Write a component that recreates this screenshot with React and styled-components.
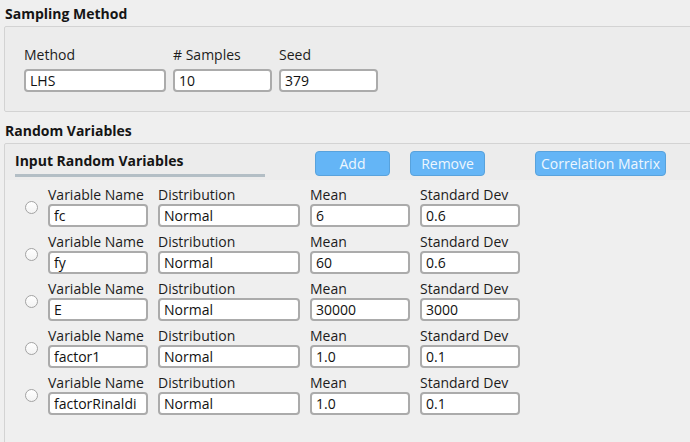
import React from "react";
import styled, { createGlobalStyle } from "styled-components";

const Global = createGlobalStyle`
  html, body { margin: 0; padding: 0; overflow: hidden; }
  body {
    background: #efefef;
    font-family: "Open Sans", "Noto Sans", sans-serif;
    font-size: 14px;
    color: #1c1c1c;
  }
`;

const Page = styled.div`
  height: 442px;
  display: flex;
  flex-direction: column;
`;

const SectionTitle = styled.div`
  font-weight: 700;
  font-size: 14px;
  line-height: 17px;
  color: #151515;
  padding: ${(p) => p.$pad || "5px 0 4px 5px"};
`;

const GroupBox = styled.div`
  margin-left: 4px;
  margin-right: -10px;
  border: 1px solid #d3d3d3;
  border-radius: 2px;
  background: #ececec;
  ${(p) => (p.$grow ? "flex: 1; margin-bottom: -10px; display: flex; flex-direction: column;" : "")}
`;

const SamplingRow = styled.div`
  display: flex;
  gap: 7px;
  padding: 20px 0 19px 19px;
`;

const Field = styled.div`
  display: flex;
  flex-direction: column;
  gap: ${(p) => p.$gap || 1}px;
  width: ${(p) => p.$w}px;
`;

const Label = styled.div`
  font-size: 14px;
  line-height: 16px;
  color: #1c1c1c;
  white-space: nowrap;
`;

const TextBox = styled.input`
  box-sizing: border-box;
  width: 100%;
  height: 23px;
  margin: 0;
  padding: 0 4px;
  border: 2px solid #ababab;
  border-radius: 4px;
  background: #fff;
  font-family: inherit;
  font-size: 14px;
  color: #111;
  outline: none;
`;

const Header = styled.div`
  display: flex;
  align-items: flex-start;
  padding: 7px 0 0 10px;
  height: 29px;
`;

const HeaderTitle = styled.div`
  width: 250px;
  display: flex;
  flex-direction: column;
  gap: 5px;
  padding-top: 1px;
`;

const SubTitle = styled.div`
  font-weight: 700;
  font-size: 14px;
  line-height: 17px;
  color: #151515;
  white-space: nowrap;
`;

const Bar = styled.div`
  height: 3px;
  background: #b3bec5;
`;

const Btn = styled.button`
  box-sizing: border-box;
  width: ${(p) => p.$w}px;
  height: 25px;
  margin-left: ${(p) => p.$ml}px;
  padding: 0;
  border: 1px solid #58a2dc;
  border-radius: 4px;
  background: #64b5f6;
  color: #eef7fe;
  font-family: inherit;
  font-size: 14px;
  white-space: nowrap;
`;

const Scroll = styled.div`
  flex: 1;
  background: #efefef;
  padding: 7px 0 0 20px;
  display: flex;
  flex-direction: column;
  gap: 7px;
`;

const Row = styled.div`
  display: flex;
  align-items: center;
  gap: 10px;
`;

const Radio = styled.span`
  box-sizing: border-box;
  width: 13px;
  height: 13px;
  border-radius: 50%;
  border: 1px solid #a3a3a3;
  background: linear-gradient(#ffffff, #f3f3f3);
  margin-top: 1px;
`;

const Fields = styled.div`
  display: flex;
  gap: 10px;
`;

const vars = [
  ["fc", "6", "0.6"],
  ["fy", "60", "0.6"],
  ["E", "30000", "3000"],
  ["factor1", "1.0", "0.1"],
  ["factorRinaldi", "1.0", "0.1"],
];

export default function App() {
  return (
    <Page>
      <Global />
      <SectionTitle>Sampling Method</SectionTitle>
      <GroupBox>
        <SamplingRow>
          <Field $w={142} $gap={6}>
            <Label>Method</Label>
            <TextBox readOnly value="LHS" />
          </Field>
          <Field $w={99} $gap={6}>
            <Label># Samples</Label>
            <TextBox readOnly value="10" />
          </Field>
          <Field $w={99} $gap={6}>
            <Label>Seed</Label>
            <TextBox readOnly value="379" />
          </Field>
        </SamplingRow>
      </GroupBox>
      <SectionTitle $pad="10px 0 4px 5px">Random Variables</SectionTitle>
      <GroupBox $grow>
        <Header>
          <HeaderTitle>
            <SubTitle>Input Random Variables</SubTitle>
            <Bar />
          </HeaderTitle>
          <Btn $w={75} $ml={50}>Add</Btn>
          <Btn $w={75} $ml={20}>Remove</Btn>
          <Btn $w={131} $ml={50}>Correlation Matrix</Btn>
        </Header>
        <Scroll>
          {vars.map(([name, mean, sd]) => (
            <Row key={name}>
              <Radio />
              <Fields>
                <Field $w={100}>
                  <Label>Variable Name</Label>
                  <TextBox readOnly value={name} />
                </Field>
                <Field $w={142}>
                  <Label>Distribution</Label>
                  <TextBox readOnly value="Normal" />
                </Field>
                <Field $w={100}>
                  <Label>Mean</Label>
                  <TextBox readOnly value={mean} />
                </Field>
                <Field $w={100}>
                  <Label>Standard Dev</Label>
                  <TextBox readOnly value={sd} />
                </Field>
              </Fields>
            </Row>
          ))}
        </Scroll>
      </GroupBox>
    </Page>
  );
}
